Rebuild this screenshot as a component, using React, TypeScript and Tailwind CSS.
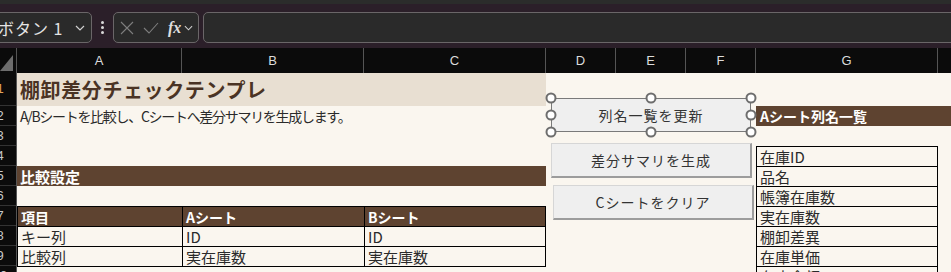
import React from 'react'

const cols = [
  { label: 'A', w: 'w-[165px]' },
  { label: 'B', w: 'w-[182px]' },
  { label: 'C', w: 'w-[182px]' },
  { label: 'D', w: 'w-[70px]' },
  { label: 'E', w: 'w-[70px]' },
  { label: 'F', w: 'w-[70px]' },
  { label: 'G', w: 'w-[182px]' },
]

const rowHeights = ['h-[33px]', 'h-[20px]', 'h-[20px]', 'h-[20px]', 'h-[20px]', 'h-[20px]', 'h-[20px]', 'h-[20px]', 'h-[20px]', 'h-[20px]']

const listItems = ['在庫ID', '品名', '帳簿在庫数', '実在庫数', '棚卸差異', '在庫単価', '在庫金額']

function Chevron({ className = '' }: { className?: string }) {
  return (
    <svg viewBox="0 0 10 6" className={className} fill="none" stroke="currentColor" strokeWidth="1.2">
      <path d="M1 1l4 4 4-4" />
    </svg>
  )
}

function FormulaBar() {
  return (
    <div className="h-[44px] bg-[#2b1f29] flex items-start pt-[8px]">
      {/* Name box */}
      <div className="ml-[-20px] w-[112px] h-[31px] rounded-[5px] border border-[#6a6668] bg-[#2a2a2a] flex items-center pl-[17px] pr-[6px]">
        <span className="text-[16px] text-[#e4e4e4] font-['Noto_Sans_CJK_JP',sans-serif] tracking-[1px]">ボタン 1</span>
        <Chevron className="ml-auto w-[10px] h-[6px] text-[#d0d0d0]" />
      </div>
      <div className="w-[21px] h-[31px] flex flex-col items-center justify-center gap-[2px]">
        <span className="w-[3px] h-[3px] rounded-full bg-[#d8d8d8]" />
        <span className="w-[3px] h-[3px] rounded-full bg-[#d8d8d8]" />
        <span className="w-[3px] h-[3px] rounded-full bg-[#d8d8d8]" />
      </div>
      {/* Cancel / enter / fx */}
      <div className="w-[86px] h-[31px] rounded-[5px] border border-[#6a6668] bg-[#2a2a2a] flex items-center pl-[6px] pr-[4px]">
        <svg viewBox="0 0 14 14" className="w-[14px] h-[14px] text-[#7e7e7e]" fill="none" stroke="currentColor" strokeWidth="1.1">
          <path d="M1 1l12 12M13 1L1 13" />
        </svg>
        <svg viewBox="0 0 16 12" className="ml-[9px] w-[16px] h-[12px] text-[#7e7e7e]" fill="none" stroke="currentColor" strokeWidth="1.1">
          <path d="M1 6l5 5L15 1" />
        </svg>
        <span className="ml-[9px] text-[16px] italic font-bold text-[#dedede] font-['Liberation_Serif',serif] leading-none">fx</span>
        <Chevron className="ml-[3px] w-[9px] h-[6px] text-[#d0d0d0]" />
      </div>
      <div className="ml-[4px] flex-1 mr-[-10px] h-[31px] rounded-[5px] border border-[#6a6668] bg-[#2a2a2a]" />
    </div>
  )
}

function ColumnHeader() {
  return (
    <div className="h-[25px] flex bg-[#0b0b0b] font-['Liberation_Sans',sans-serif] text-[13px] text-[#dcdcdc]">
      <div className="w-[17px] border-r border-[#555] relative">
        <svg viewBox="0 0 13 16" className="absolute right-[3px] bottom-[2px] w-[13px] h-[16px]">
          <path d="M13 0L13 16L0 16Z" fill="#6d6d6d" />
        </svg>
      </div>
      {cols.map((c) => (
        <div key={c.label} className={`${c.w} border-r border-[#555] flex items-center justify-center`}>
          {c.label}
        </div>
      ))}
      <div className="flex-1" />
    </div>
  )
}

function RowHeader() {
  return (
    <div className="w-[17px] bg-[#0b0b0b] border-r border-[#555] flex flex-col font-['Liberation_Sans',sans-serif] text-[13px]">
      {rowHeights.map((h, i) => (
        <div key={i} className={`${h} overflow-hidden border-b border-[#333] flex items-center`}>
          <div className={`w-[20px] ml-[-10px] text-center shrink-0 ${i === 0 ? 'text-[#e0a25a]' : 'text-[#c8c8c8]'}`}>
            {i + 1}
          </div>
        </div>
      ))}
    </div>
  )
}

function Handle({ className }: { className: string }) {
  return <span className={`absolute w-[11px] h-[11px] rounded-full bg-white border-2 border-[#6e6e6e] -translate-x-1/2 -translate-y-1/2 ${className}`} />
}

export default function App() {
  const base = 'flex items-center pl-[3px] text-[#2a2a2a] whitespace-nowrap'
  const cell = `${base} text-[15px]`
  const tblBorder = 'border-black'
  return (
    <div className="w-[951px] h-[272px] overflow-hidden bg-[#faf6ef] font-['Noto_Sans_CJK_JP','Liberation_Sans',sans-serif]">
      <div className="h-[4px] bg-[#2b2c2b]" />
      <FormulaBar />
      <ColumnHeader />
      <div className="flex relative">
        <RowHeader />
        <div className="flex-1 grid grid-cols-[165px_182px_182px_70px_70px_70px_182px_1fr] grid-rows-[33px_repeat(9,20px)] leading-none">
          {/* Row 1 */}
          <div className="col-span-3 bg-[#e8dfd2] flex items-center pl-[3px] pt-[1px] text-[20px] font-bold tracking-[0.6px] text-[#4a3324]">
            棚卸差分チェックテンプレ
          </div>
          <div className="col-span-5" />

          {/* Row 2 */}
          <div className={`col-span-3 ${base} text-[14px] tracking-[-1.3px]`}>A/Bシートを比較し、Cシートへ差分サマリを生成します。</div>
          <div className="col-span-3" />
          <div className="col-span-2 bg-[#5e4330] flex items-center pl-[4px] text-[14px] font-bold text-white">Aシート列名一覧</div>

          {/* Row 3 */}
          <div className="col-span-8" />

          {/* Rows 4-10 */}
          {Array.from({ length: 7 }).map((_, r) => {
            const row = r + 4
            return (
              <React.Fragment key={row}>
                {row === 5 ? (
                  <div className="col-span-3 bg-[#5e4330] flex items-center pl-[3px] text-[15px] font-bold text-white">比較設定</div>
                ) : row === 7 ? (
                  <>
                    <div className={`bg-[#5e4330] border-t border-l ${tblBorder} flex items-center pl-[3px] text-[14px] font-bold text-white`}>項目</div>
                    <div className={`bg-[#5e4330] border-t border-l ${tblBorder} flex items-center pl-[3px] text-[14px] font-bold text-white`}>Aシート</div>
                    <div className={`bg-[#5e4330] border-t border-l border-r ${tblBorder} flex items-center pl-[3px] text-[14px] font-bold text-white`}>Bシート</div>
                  </>
                ) : row === 8 || row === 9 ? (
                  <>
                    <div className={`${cell} border-t border-l ${tblBorder}`}>{row === 8 ? 'キー列' : '比較列'}</div>
                    <div className={`${cell} border-t border-l ${tblBorder}`}>{row === 8 ? 'ID' : '実在庫数'}</div>
                    <div className={`${cell} border-t border-l border-r ${tblBorder}`}>{row === 8 ? 'ID' : '実在庫数'}</div>
                  </>
                ) : row === 10 ? (
                  <div className={`col-span-3 border-t ${tblBorder}`} />
                ) : (
                  <div className="col-span-3" />
                )}
                <div className="col-span-3" />
                <div className={`${cell} border-t border-l border-r ${tblBorder}`}>{listItems[r]}</div>
                <div />
              </React.Fragment>
            )
          })}
        </div>

        {/* Form control buttons floating over the sheet */}
        <div className="absolute left-[551px] top-[25px] w-[200px] h-[34px] bg-[#efefef] border border-[#7a7a7a] flex items-center justify-center text-[14px] tracking-[1px] text-[#333]">
          列名一覧を更新
        </div>
        <div className="absolute left-[551px] top-[70px] w-[201px] h-[35px] bg-[#efefef] border border-[#d6d6d6] border-b-2 border-r-2 border-b-[#9c9c9c] border-r-[#9c9c9c] flex items-center justify-center text-[14px] tracking-[1px] text-[#333]">
          差分サマリを生成
        </div>
        <div className="absolute left-[553px] top-[112px] w-[201px] h-[35px] bg-[#efefef] border border-[#d6d6d6] border-b-2 border-r-2 border-b-[#9c9c9c] border-r-[#9c9c9c] flex items-center justify-center text-[14px] tracking-[1px] text-[#333]">
          Cシートをクリア
        </div>
        <Handle className="left-[551px] top-[25px]" />
        <Handle className="left-[651px] top-[25px]" />
        <Handle className="left-[751px] top-[25px]" />
        <Handle className="left-[551px] top-[42px]" />
        <Handle className="left-[751px] top-[42px]" />
        <Handle className="left-[551px] top-[59px]" />
        <Handle className="left-[651px] top-[59px]" />
        <Handle className="left-[751px] top-[59px]" />
      </div>
    </div>
  )
}
